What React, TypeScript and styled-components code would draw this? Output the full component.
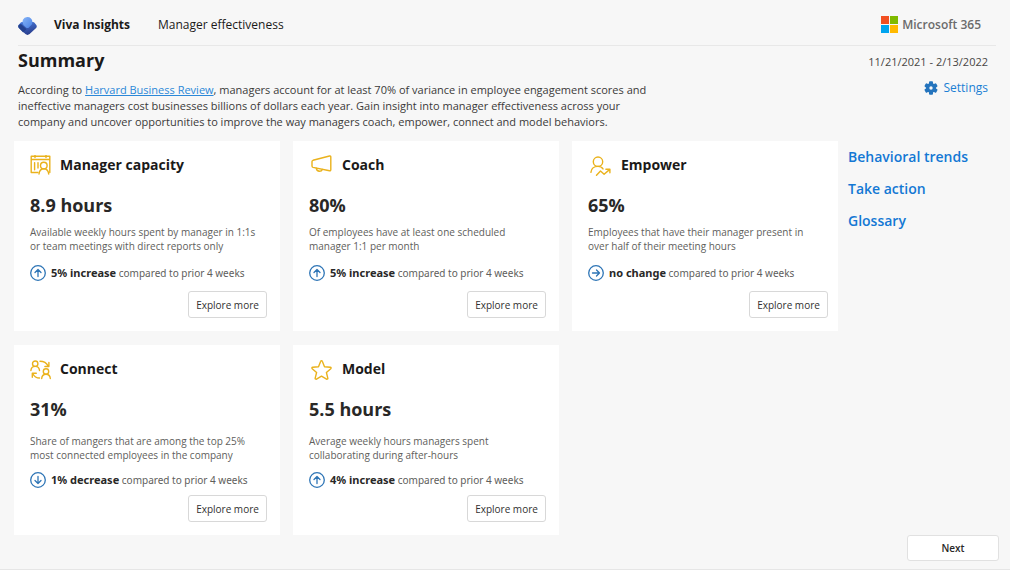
import React from "react";
import styled, { createGlobalStyle } from "styled-components";

const GlobalStyle = createGlobalStyle`
  *, *::before, *::after { box-sizing: border-box; }
  body {
    margin: 0;
    background: #f7f7f7;
    color: #1b1a19;
    font-family: "Open Sans", "Noto Sans", sans-serif;
  }
  h1, h2, p { margin: 0; }
  button { font-family: inherit; cursor: pointer; }
`;

const Page = styled.div`
  min-height: 100vh;
  display: flex;
  flex-direction: column;
  border-bottom: 1px solid #e6e6e6;
`;

const Header = styled.header`
  display: flex;
  align-items: center;
  height: 46px;
  margin: 0 14px 0 18px;
  padding-top: 4px;
  border-bottom: 1px solid #e8e8e8;
`;

const Product = styled.span`
  margin-left: 17px;
  font-size: 12px;
  font-weight: 700;
`;

const Section = styled.span`
  margin-left: 28px;
  font-size: 12px;
`;

const Brand = styled.div`
  display: flex;
  align-items: center;
  gap: 4px;
  margin-left: auto;
  margin-right: 15px;
  color: #6b6b6b;
  font-size: 12px;
  font-weight: 600;
`;

const Intro = styled.section`
  display: flex;
  justify-content: space-between;
  padding: 2px 22px 0 18px;
`;

const Title = styled.h1`
  font-size: 18px;
  line-height: 24px;
  font-weight: 700;
`;

const Lead = styled.p`
  margin-top: 10px;
  font-size: 11px;
  line-height: 16px;
  color: #3b3a39;

  a { color: #2b88d8; }
`;

const Meta = styled.div`
  display: flex;
  flex-direction: column;
  align-items: flex-end;
  gap: 7px;
  padding-top: 5px;
`;

const DateRange = styled.span`
  font-size: 11px;
  line-height: 18px;
  color: #484644;
`;

const SettingsLink = styled.a`
  display: flex;
  align-items: center;
  gap: 6px;
  color: #1a7fd4;
  font-size: 12px;
  line-height: 20px;
  text-decoration: none;
`;

const Content = styled.main`
  display: grid;
  grid-template-columns: minmax(0, 1fr) 150px;
  gap: 10px;
  padding: 11px 12px 0 14px;
`;

const Cards = styled.div`
  display: grid;
  grid-template-columns: repeat(3, minmax(0, 1fr));
  gap: 14px 13px;
`;

const Card = styled.article`
  display: flex;
  flex-direction: column;
  min-height: 190px;
  padding: 12px 13px 13px 16px;
  background: #fff;

  &:nth-child(3n) { padding-right: 10px; }
`;

const CardHead = styled.div`
  display: flex;
  align-items: center;
  gap: 9px;
  height: 24px;

  ${Card}:not(:nth-child(3n + 1)) & {
    gap: 10px;
    padding-left: 2px;
  }
`;

const CardTitle = styled.h2`
  font-size: 14px;
  line-height: 24px;
  font-weight: 700;
`;

const Value = styled.p`
  margin-top: 16px;
  font-size: 18px;
  line-height: 24px;
  font-weight: 700;
  color: #292827;
`;

const Description = styled.p<{ $low?: boolean }>`
  margin-top: ${(p) => (p.$low ? 13 : 8)}px;
  font-size: 10px;
  line-height: 14px;
  color: #605e5c;
`;

const Trend = styled.p<{ $low?: boolean }>`
  display: flex;
  align-items: center;
  gap: 5px;
  margin-top: ${(p) => (p.$low ? 9 : 11)}px;
  font-family: "Noto Sans", "Open Sans", sans-serif;
  font-size: 10px;
  line-height: 18px;
  color: #605e5c;

  strong {
    font-size: 11px;
    line-height: 16px;
    color: #292827;
  }
`;

const ExploreButton = styled.button`
  align-self: flex-end;
  width: 79px;
  height: 27px;
  margin-top: auto;
  padding: 0;
  border: 1px solid #d8d8d8;
  border-radius: 3px;
  background: #fff;
  color: #323130;
  font-size: 10px;
`;

const SideNav = styled.nav`
  display: flex;
  flex-direction: column;
  gap: 8px;
  padding-top: 4px;

  a {
    color: #1378d4;
    font-size: 14px;
    line-height: 24px;
    font-weight: 600;
    text-decoration: none;
  }
`;

const Footer = styled.footer`
  display: flex;
  justify-content: flex-end;
  margin-top: auto;
  padding: 0 11px 8px;
`;

const NextButton = styled.button`
  width: 92px;
  height: 26px;
  border: 1px solid #e1e1e1;
  border-radius: 3px;
  background: #fff;
  color: #292827;
  font-size: 10px;
  font-weight: 600;
`;

const LineIcon = styled.svg`
  flex: none;
  width: 21px;
  height: 21px;
  fill: none;
  stroke: #eab21c;
  stroke-width: 1.4;
  stroke-linecap: round;
  stroke-linejoin: round;
`;

const TrendIcon = styled.svg`
  flex: none;
  width: 16px;
  height: 16px;
  fill: none;
  stroke: #2e75b6;
  stroke-width: 1.3;
  stroke-linecap: round;
  stroke-linejoin: round;
`;

const VivaLogo = () => (
  <svg width="19" height="20" viewBox="0 0 19 20" aria-hidden="true">
    <defs>
      <linearGradient id="viva-base" x1="0" y1="0" x2="0.4" y2="1">
        <stop offset="0" stopColor="#4a7ee0" />
        <stop offset="1" stopColor="#2a3f8f" />
      </linearGradient>
      <linearGradient id="viva-top" x1="0" y1="0" x2="1" y2="1">
        <stop offset="0" stopColor="#86b4f8" />
        <stop offset="1" stopColor="#4a82e4" />
      </linearGradient>
    </defs>
    <g transform="translate(0 2)">
      <path d="M4 5h11c.6 0 1.100.3 1.500.7l1.600 2.100c.9.900.9 2.300 0 3.200l-6.500 6.100c-1.200 1.100-3 1.100-4.200 0L.9 11c-.9-.9-.9-2.300 0-3.200l1.600-2.100c.4-.4.900-.7 1.500-.7Z" fill="url(#viva-base)" />
      <path d="m3 7 5.500 5.300-3.300 3.100L.9 11c-.9-.9-.9-2.300 0-3.200Z" fill="#24428f" />
      <path d="M9.500 0A4.900 4.900 0 0 1 14.400 4.900c0 1.300-.5 2.500-1.400 3.400l-2.100 2.200c-.8.8-2 .8-2.800 0L5.500 8A4.900 4.900 0 0 1 9.500 0Z" fill="url(#viva-top)" />
    </g>
  </svg>
);

const MicrosoftLogo = () => (
  <svg width="17" height="17" viewBox="0 0 17 17" aria-hidden="true">
    <path fill="#f25022" d="M0 0h8v8H0z" />
    <path fill="#7fba00" d="M9 0h8v8H9z" />
    <path fill="#00a4ef" d="M0 9h8v8H0z" />
    <path fill="#ffb900" d="M9 9h8v8H9z" />
  </svg>
);

const GearIcon = () => (
  <svg width="14" height="14" viewBox="0 0 14 14" aria-hidden="true">
    <g fill="#2474bd">
      {[0, 60, 120].map((angle) => (
        <rect key={angle} x="5" y="0.300" width="4" height="13.400" rx="1" transform={`rotate(${angle} 7 7)`} />
      ))}
      <circle cx="7" cy="7" r="5" />
    </g>
    <circle cx="7" cy="7" r="1.700" fill="#f7f7f7" />
  </svg>
);

const CapacityIcon = () => (
  <LineIcon viewBox="0 0 21 21" aria-hidden="true">
    <path d="M8 17.500H1.200V1.200h18.600v16.300M1.200 4.500h18.600M5 .2v2.400M16 .2v2.400M4.600 7.600v7.200M8 7.600v5.400" />
    <circle cx="13.800" cy="10.500" r="3.300" />
    <path d="M9 19c.4-3.300 2.100-5.200 4.800-5.200s4.500 1.900 4.900 5.200" />
  </LineIcon>
);

const CoachIcon = () => (
  <LineIcon viewBox="0 0 21 21" aria-hidden="true">
    <path d="M18.500 1 2 5.300c-.7.200-1 .6-1 1.200v4.600c0 .7.300 1.100 1 1.300L18.500 15.800c.8.200 1.300-.2 1.300-1V2c0-.8-.5-1.200-1.300-1Z" />
    <path d="M5.300 13.200c.2 1.800 1.400 3.100 3.100 3.100 1.500 0 2.600-.8 3-1.900" />
  </LineIcon>
);

const EmpowerIcon = () => (
  <LineIcon viewBox="0 0 21 21" aria-hidden="true">
    <circle cx="8" cy="6.700" r="4.700" />
    <path d="M.9 17.300c.4-3.500 2.700-5.900 7.100-5.900 2.200 0 3.900.8 5 2.500M6.500 20.300l4-4.300 3.600 3.300 5.400-4.700M15.900 14.200h4v3.600" />
  </LineIcon>
);

const ConnectIcon = () => (
  <LineIcon viewBox="0 0 21 21" aria-hidden="true">
    <circle cx="5.200" cy="4.700" r="2.700" />
    <path d="M.9 11.500c.2-2.600 1.700-4.100 4.300-4.100s4.100 1.500 4.300 4.100" />
    <circle cx="16" cy="12.500" r="2.700" />
    <path d="M11.700 19.500c.2-2.700 1.700-4.300 4.300-4.300s4.100 1.600 4.300 4.300M10 2.300c3.900 0 6.500 1.500 8.200 4.800M18.900 3.500v4h-4M9.500 19c-3 0-5.100-1.200-6.700-4.300M2.300 18.300v-4h4" />
  </LineIcon>
);

const ModelIcon = () => (
  <LineIcon viewBox="0 0 21 21" aria-hidden="true">
    <path d="M9.700 2.300c.3-.8 1.300-.8 1.600 0l2.200 5.400 5.800.5c.8.100 1.100 1 .5 1.500l-4.400 3.800 1.400 5.600c.2.800-.6 1.400-1.300 1l-5-3-5 3c-.7.400-1.500-.2-1.300-1l1.400-5.600-4.400-3.800c-.6-.5-.3-1.400.5-1.500l5.800-.5Z" />
  </LineIcon>
);

type Direction = "up" | "down" | "right";

const rotation: Record<Direction, number> = { up: 0, right: 90, down: 180 };

const TrendArrow = ({ direction }: { direction: Direction }) => (
  <TrendIcon viewBox="0 0 16 16" aria-hidden="true">
    <circle cx="8" cy="8" r="7.300" />
    <path d="M8 11.500V4.500M5 7.500l3-3 3 3" transform={`rotate(${rotation[direction]} 8 8)`} />
  </TrendIcon>
);

interface Metric {
  title: string;
  icon: React.ReactNode;
  value: string;
  lines: [string, string];
  direction: Direction;
  change: string;
  low?: boolean;
}

const metrics: Metric[] = [
  {
    title: "Manager capacity",
    icon: <CapacityIcon />,
    value: "8.9 hours",
    lines: ["Available weekly hours spent by manager in 1:1s", "or team meetings with direct reports only"],
    direction: "up",
    change: "5% increase",
  },
  {
    title: "Coach",
    icon: <CoachIcon />,
    value: "80%",
    lines: ["Of employees have at least one scheduled", "manager 1:1 per month"],
    direction: "up",
    change: "5% increase",
  },
  {
    title: "Empower",
    icon: <EmpowerIcon />,
    value: "65%",
    lines: ["Employees that have their manager present in", "over half of their meeting hours"],
    direction: "right",
    change: "no change",
  },
  {
    title: "Connect",
    icon: <ConnectIcon />,
    value: "31%",
    lines: ["Share of mangers that are among the top 25%", "most connected employees in the company"],
    direction: "down",
    change: "1% decrease",
    low: true,
  },
  {
    title: "Model",
    icon: <ModelIcon />,
    value: "5.5 hours",
    lines: ["Average weekly hours managers spent", "collaborating during after-hours"],
    direction: "up",
    change: "4% increase",
    low: true,
  },
];

const MetricCard = ({ metric }: { metric: Metric }) => (
  <Card>
    <CardHead>
      {metric.icon}
      <CardTitle>{metric.title}</CardTitle>
    </CardHead>
    <Value>{metric.value}</Value>
    <Description $low={metric.low}>
      {metric.lines[0]}
      <br />
      {metric.lines[1]}
    </Description>
    <Trend $low={metric.low}>
      <TrendArrow direction={metric.direction} />
      <span>
        <strong>{metric.change}</strong> compared to prior 4 weeks
      </span>
    </Trend>
    <ExploreButton type="button">Explore more</ExploreButton>
  </Card>
);

export default function App() {
  return (
    <Page>
      <GlobalStyle />
      <Header>
        <VivaLogo />
        <Product>Viva Insights</Product>
        <Section>Manager effectiveness</Section>
        <Brand>
          <MicrosoftLogo />
          Microsoft 365
        </Brand>
      </Header>
      <Intro>
        <div>
          <Title>Summary</Title>
          <Lead>
            According to <a href="#hbr">Harvard Business Review</a>, managers account for at least 70% of variance in employee engagement scores and
            <br />
            ineffective managers cost businesses billions of dollars each year. Gain insight into manager effectiveness across your
            <br />
            company and uncover opportunities to improve the way managers coach, empower, connect and model behaviors.
          </Lead>
        </div>
        <Meta>
          <DateRange>11/21/2021 - 2/13/2022</DateRange>
          <SettingsLink href="#settings">
            <GearIcon />
            Settings
          </SettingsLink>
        </Meta>
      </Intro>
      <Content>
        <Cards>
          {metrics.map((metric) => (
            <MetricCard key={metric.title} metric={metric} />
          ))}
        </Cards>
        <SideNav aria-label="Report sections">
          <a href="#trends">Behavioral trends</a>
          <a href="#action">Take action</a>
          <a href="#glossary">Glossary</a>
        </SideNav>
      </Content>
      <Footer>
        <NextButton type="button">Next</NextButton>
      </Footer>
    </Page>
  );
}
